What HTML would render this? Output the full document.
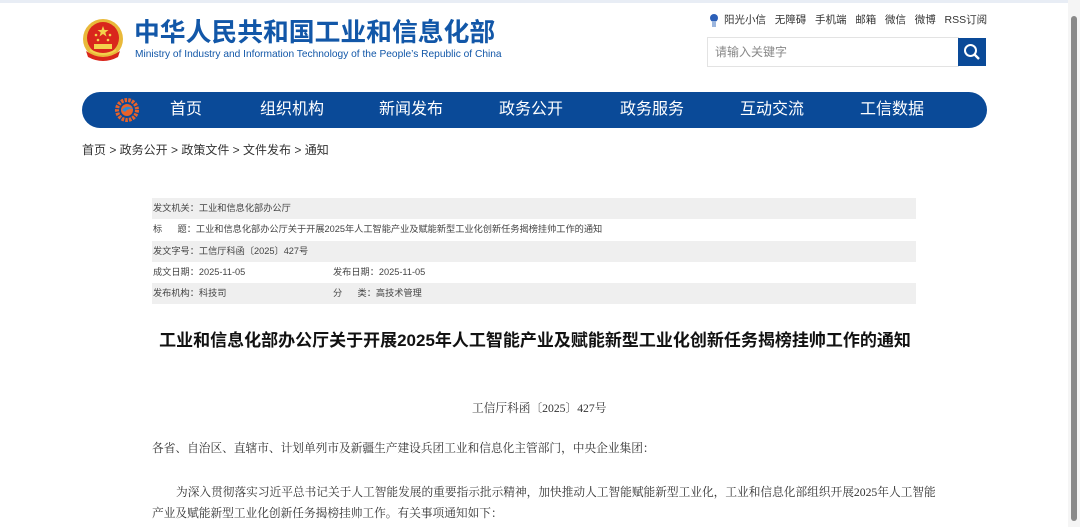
<!DOCTYPE html>
<html><head><meta charset="utf-8">
<style>
*{margin:0;padding:0;box-sizing:border-box}
body{width:1080px;height:527px;overflow:hidden;background:#fff;font-family:"Liberation Sans","Noto Sans CJK SC",sans-serif;position:relative;color:#333}
.topline{position:absolute;left:0;top:0;width:1080px;height:3px;background:#e8edf5}
.abs{position:absolute;white-space:nowrap}
.nav{position:absolute;left:82px;top:92px;width:905px;height:36px;background:#0a4a98;border-radius:18px}
.nav span{position:absolute;top:7px;color:#fff;font-size:16px;line-height:22px}
.bc{position:absolute;left:82px;top:141px;font-size:12px;color:#333}
.tbl{position:absolute;left:152px;top:198px;width:764px}
.row{height:21.3px;font-size:9.2px;line-height:21px;color:#444;padding-left:1px;position:relative}
.row.g{background:#efefef}
.body{font-family:"Liberation Serif","Noto Serif CJK SC",serif;font-size:11.7px;color:#333}
.sb{position:absolute;left:1068px;top:0;width:12px;height:527px;background:#f5f5f5}
.sb div{position:absolute;left:3px;top:16px;width:6px;height:505px;background:#8a8a8a;border-radius:3px}
</style></head><body>
<div class="topline"></div>
<svg class="abs" style="left:82px;top:17px" width="42" height="46" viewBox="0 0 42 46">
<circle cx="21" cy="22" r="20" fill="#e9b93a"/>
<circle cx="21" cy="21" r="16" fill="#d9261c"/>
<polygon points="21,9 22.5,13 26.5,13 23.3,15.5 24.5,19.5 21,17 17.5,19.5 18.7,15.5 15.5,13 19.5,13" fill="#f3d24c"/>
<circle cx="14" cy="18" r="1.3" fill="#f3d24c"/><circle cx="28" cy="18" r="1.3" fill="#f3d24c"/>
<circle cx="16" cy="23" r="1.3" fill="#f3d24c"/><circle cx="26" cy="23" r="1.3" fill="#f3d24c"/>
<rect x="12" y="27" width="18" height="5" fill="#f3d24c"/>
<path d="M4 34 Q21 46 38 34 L36 40 Q21 48 6 40Z" fill="#d9261c"/>
<path d="M8 33 Q21 41 34 33" stroke="#f3d24c" stroke-width="2" fill="none"/>
</svg>
<div class="abs" style="left:134px;top:17px;font-size:25.8px;font-weight:bold;color:#1257a8;line-height:32px">中华人民共和国工业和信息化部</div>
<div class="abs" style="left:135px;top:49px;font-size:10.2px;color:#1257a8;line-height:12px">Ministry of Industry and Information Technology of the People’s Republic of China</div>

<svg class="abs" style="left:709px;top:13px" width="10" height="15"><circle cx="5" cy="5" r="4" fill="#2b5fb8"/><rect x="3" y="8" width="4" height="6" fill="#9cb6de"/></svg>
<div class="abs" style="left:724px;top:13px;font-size:10.5px;color:#333;line-height:15px">阳光小信&nbsp;&nbsp; 无障碍&nbsp;&nbsp; 手机端&nbsp;&nbsp; 邮箱&nbsp;&nbsp; 微信&nbsp;&nbsp; 微博&nbsp;&nbsp; RSS订阅</div>
<div class="abs" style="left:707px;top:37px;width:252px;height:30px;border:1px solid #e3e3e3;font-size:12px;color:#888;line-height:28px;padding-left:7px">请输入关键字</div>
<div class="abs" style="left:958px;top:38px;width:28px;height:28px;background:#0a4a98"></div>
<svg class="abs" style="left:962px;top:42px" width="20" height="20"><circle cx="8.5" cy="8.5" r="5.5" stroke="#fff" stroke-width="2" fill="none"/><line x1="12.5" y1="12.5" x2="17" y2="17" stroke="#fff" stroke-width="2.4"/></svg>

<div class="nav">
<svg class="abs" style="left:33px;top:6px" width="24" height="24" viewBox="0 0 24 24"><circle cx="12" cy="12" r="10" fill="none" stroke="#e8622a" stroke-width="4" stroke-dasharray="2.5 1.2"/><circle cx="12" cy="12" r="6" fill="#e8622a"/><path d="M7 12 Q12 6 18 11 Q13 10 10 14" fill="#2a8ad6"/></svg>
<span style="left:88px">首页</span>
<span style="left:178px">组织机构</span>
<span style="left:297px">新闻发布</span>
<span style="left:417px">政务公开</span>
<span style="left:538px">政务服务</span>
<span style="left:658px">互动交流</span>
<span style="left:778px">工信数据</span>
</div>

<div class="bc">首页 &gt; 政务公开 &gt; 政策文件 &gt; 文件发布 &gt; 通知</div>

<div class="tbl">
<div class="row g">发文机关：工业和信息化部办公厅</div>
<div class="row">标&nbsp;&nbsp;&nbsp;&nbsp;&nbsp;&nbsp;题：工业和信息化部办公厅关于开展2025年人工智能产业及赋能新型工业化创新任务揭榜挂帅工作的通知</div>
<div class="row g">发文字号：工信厅科函〔2025〕427号</div>
<div class="row">成文日期：2025-11-05<span class="abs" style="left:181px;top:0">发布日期：2025-11-05</span></div>
<div class="row g">发布机构：科技司<span class="abs" style="left:181px;top:0">分&nbsp;&nbsp;&nbsp;&nbsp;&nbsp;&nbsp;类：高技术管理</span></div>
</div>

<div class="abs" style="left:0;width:1070px;top:330px;text-align:center;font-size:17px;font-weight:bold;color:#111;line-height:22px">工业和信息化部办公厅关于开展2025年人工智能产业及赋能新型工业化创新任务揭榜挂帅工作的通知</div>

<div class="abs body" style="left:472px;top:401px;line-height:16px">工信厅科函〔2025〕427号</div>
<div class="abs body" style="left:152px;top:441px;line-height:16px">各省、自治区、直辖市、计划单列市及新疆生产建设兵团工业和信息化主管部门，中央企业集团：</div>
<div class="abs body" style="left:152px;top:482px;width:790px;white-space:normal;line-height:21px;text-indent:24px">为深入贯彻落实习近平总书记关于人工智能发展的重要指示批示精神，加快推动人工智能赋能新型工业化，工业和信息化部组织开展2025年人工智能产业及赋能新型工业化创新任务揭榜挂帅工作。有关事项通知如下：</div>

<div class="sb"><div></div></div>
</body></html>
